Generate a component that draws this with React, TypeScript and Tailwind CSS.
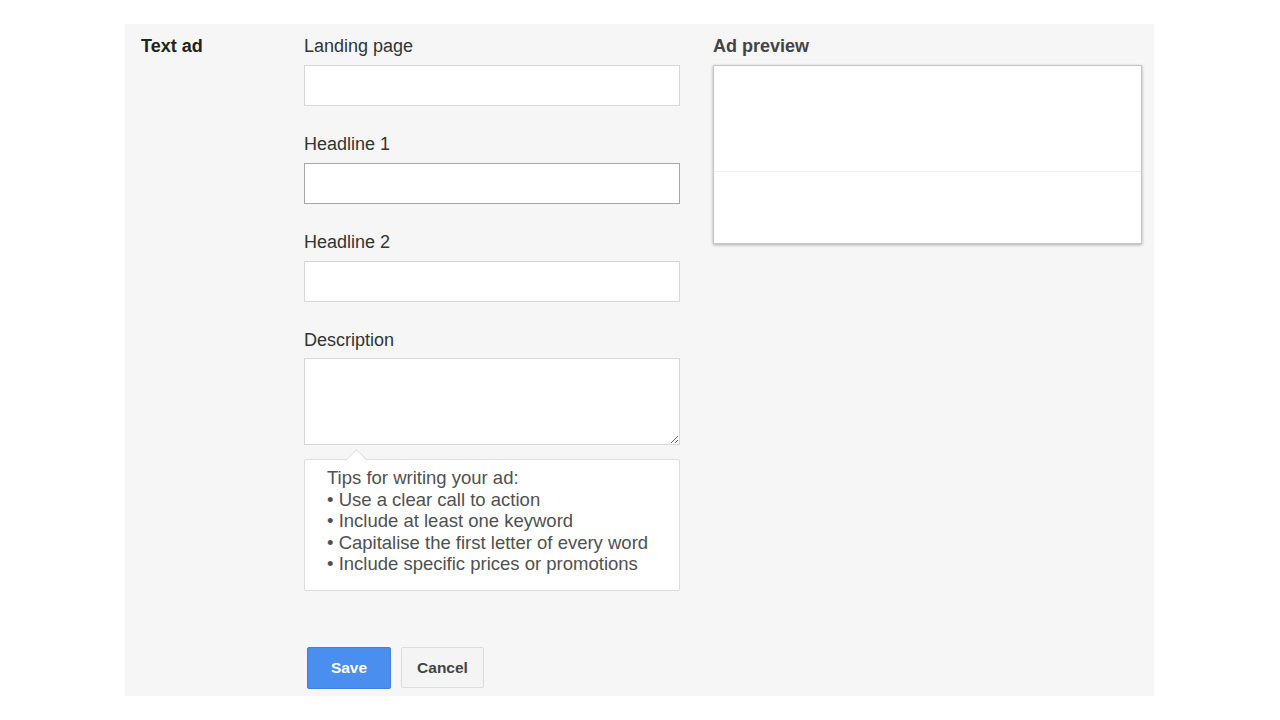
import React from 'react';

const font = { fontFamily: '"Liberation Sans", Arial, sans-serif' };

function Field({ label, focused }: { label: string; focused?: boolean }) {
  return (
    <div className="flex flex-col shrink-0 mb-[28px]">
      <label className="text-[18px] leading-[21px] text-[#333]">{label}</label>
      <input
        className={`mt-[8px] h-[41px] w-full bg-white border outline-none ${
          focused ? 'border-[#a8a8a8]' : 'border-[#d6d6d6]'
        }`}
      />
    </div>
  );
}

export default function App() {
  const tips = [
    'Use a clear call to action',
    'Include at least one keyword',
    'Capitalise the first letter of every word',
    'Include specific prices or promotions',
  ];

  return (
    <div className="w-[1280px] h-[720px] bg-white pt-[24px]" style={font}>
      <div className="ml-[125px] w-[1029px] h-[672px] bg-[#f6f6f6] flex pl-[16px] pt-[12px]">
        <div className="w-[163px] text-[18px] leading-[21px] font-bold text-[#222]">Text ad</div>

        <div className="w-[376px] flex flex-col">
          <Field label="Landing page" />
          <Field label="Headline 1" focused />
          <Field label="Headline 2" />
          <div className="flex flex-col shrink-0">
            <label className="text-[18px] leading-[21px] text-[#333]">Description</label>
            <textarea className="mt-[7px] h-[87px] w-full bg-white border border-[#d6d6d6] outline-none" />
          </div>

          <div className="relative shrink-0 mt-[14px] h-[132px] bg-white border border-[#dedede] rounded-[2px] pl-[22px] pt-[7px] text-[18.5px] leading-[21.5px] text-[#505050]">
            <div className="absolute left-[44px] -top-[8px] w-[15px] h-[15px] bg-white border-l border-t border-[#dedede] rotate-45" />
            <div>Tips for writing your ad:</div>
            {tips.map((t) => (
              <div key={t}>• {t}</div>
            ))}
          </div>

          <div className="flex shrink-0 gap-[10px] mt-[56px] ml-[3px]">
            <button className="w-[84px] h-[42px] rounded-[2px] bg-[#4a8ef0] border border-[#3f7fdc] text-white font-bold text-[15.5px]">
              Save
            </button>
            <button className="w-[83px] h-[41px] rounded-[2px] bg-[#f4f4f4] border border-[#dcdcdc] text-[#444] font-bold text-[15.5px]">
              Cancel
            </button>
          </div>
        </div>

        <div className="ml-[33px] w-[429px] flex flex-col">
          <div className="text-[18px] leading-[21px] font-bold text-[#444]">Ad preview</div>
          <div className="mt-[8px] h-[179px] bg-white border border-[#c6c6c6] shadow-[0_1px_3px_rgba(0,0,0,0.3)] flex flex-col">
            <div className="h-[106px] border-b border-[#f0f0f0]" />
            <div className="flex-1" />
          </div>
        </div>
      </div>
    </div>
  );
}
